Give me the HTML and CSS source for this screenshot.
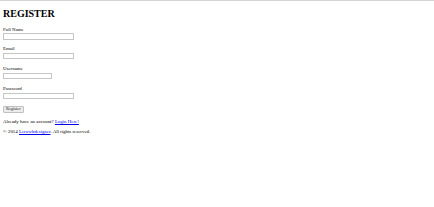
FILE: index.html
```html
<!DOCTYPE html>
<html>
<head>
  <meta charset="UTF-8">
  <title>Register</title>
  <link rel="stylesheet" href="styles.css">
</head>
<body>
  <h1>REGISTER</h1>

  <!--Register form-->
  <form class="register-form">
    <div class="field">
      <label for="fullname">Full Name</label>
      <input type="text" id="fullname" class="input-wide">
    </div>
    <div class="field">
      <label for="email">Email</label>
      <input type="text" id="email" class="input-wide">
    </div>
    <div class="field">
      <label for="username">Username</label>
      <input type="text" id="username" class="input-short">
    </div>
    <div class="field">
      <label for="password">Password</label>
      <input type="password" id="password" class="input-wide">
    </div>
    <button type="button" class="btn">Register</button>
  </form>

  <p class="login-line">Already have an account? <a href="#">Login Here!</a></p>
  <p class="footer">&copy; 2014 <a href="#">Lerowbdesigner</a>. All rights reserved.</p>
</body>
</html>
```

FILE: styles.css
```css
html { border-top: 1px solid #d4d4d4; background: #fff; }
body { margin: 0 3px; font-family: "Liberation Serif", serif; font-size: 4.9px; color: #000; }
h1 { font-size: 10px; font-weight: bold; margin: 6.6px 0 7.6px; line-height: 11.5px; }

.field { margin-bottom: 6.9px; }
.field label { display: block; line-height: 6.6px; height: 6.6px; }
.field input { display: block; box-sizing: border-box; height: 6.3px; margin: 0; padding: 0; border: 1px solid #c6c6c6; background: #fff; }
.input-wide { width: 71.3px; }
.input-short { width: 49px; }

.btn { display: block; box-sizing: border-box; width: 20.6px; height: 6.7px; margin: 1.6px 0 0; padding: 0; font-family: "Liberation Serif", serif; font-size: 4.4px; line-height: 4.6px; color: #222; background: #ececec; border: 1px solid #c0c0c0; border-radius: 1px; }

p { margin: 0; line-height: 5.75px; }
.login-line { margin-top: 6.3px; }
.footer { margin-top: 4.6px; }
a { color: #0000ee; }
```
